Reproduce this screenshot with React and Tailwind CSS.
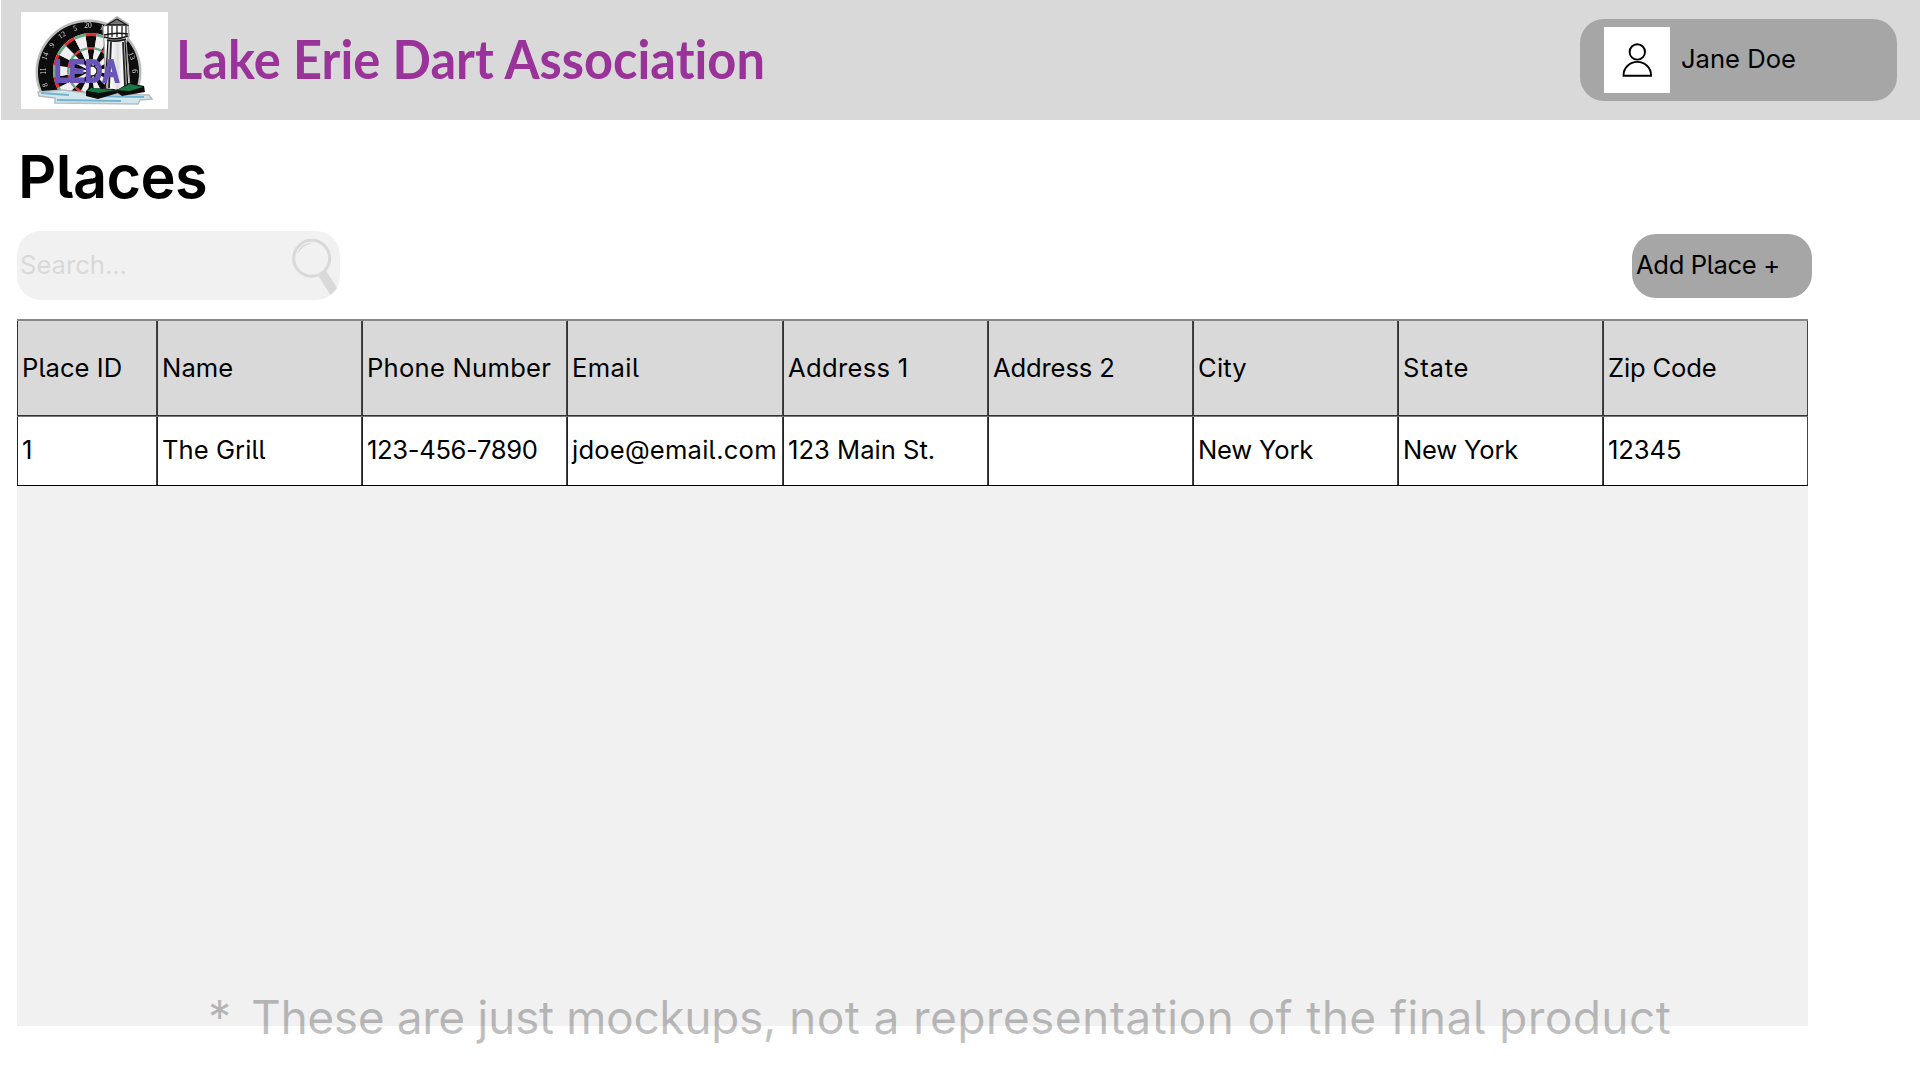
import React from "react";

const columns = [
  { label: "Place ID", value: "1", head: "tracking-[0.05px]", body: "" },
  { label: "Name", value: "The Grill", head: "tracking-[0.1px]", body: "tracking-[0.05px]" },
  { label: "Phone Number", value: "123-456-7890", head: "tracking-[0.25px]", body: "tracking-[-0.35px]" },
  { label: "Email", value: "jdoe@email.com", head: "tracking-[0.4px]", body: "tracking-[0.2px]" },
  { label: "Address 1", value: "123 Main St.", head: "tracking-[0.3px]", body: "tracking-[0px]" },
  { label: "Address 2", value: "", head: "tracking-[-0.15px]", body: "" },
  { label: "City", value: "New York", head: "tracking-[0.2px]", body: "tracking-[-0.2px]" },
  { label: "State", value: "New York", head: "tracking-[0.8px]", body: "tracking-[-0.2px]" },
  { label: "Zip Code", value: "12345", head: "tracking-[-0.15px]", body: "tracking-[-0.1px]" },
];

const grid = "grid grid-cols-[140px_205px_205px_216px_205px_205px_205px_205px_205px]";

function polar(r, deg) {
  const a = (deg * Math.PI) / 180;
  return `${(70 + r * Math.sin(a)).toFixed(2)} ${(59 - r * Math.cos(a)).toFixed(2)}`;
}

function ring(r1, r2, a, b) {
  return `M${polar(r1, a)}L${polar(r2, a)}A${r2} ${r2} 0 0 1 ${polar(r2, b)}L${polar(r1, b)}A${r1} ${r1} 0 0 0 ${polar(r1, a)}Z`;
}

function Logo() {
  const wedges = Array.from({ length: 20 }, (_, i) => i);
  const marks = [
    [24, 73, "8", -110], [22, 59, "11", -90], [24, 44, "14", -70], [31, 33, "9", -52],
    [41, 23, "12", -35], [54, 16, "5", -15], [67, 13, "20", 0], [81, 15, "1", 14],
    [111, 44, "13", 70], [113, 59, "6", 90],
  ];
  return (
    <svg viewBox="0 0 147 97" className="h-[97px] w-[147px] shrink-0 bg-white">
      <defs>
        <clipPath id="board"><path d="M0 0H147V82H0Z" /></clipPath>
        <linearGradient id="tower" x1="0" x2="1">
          <stop offset="0" stopColor="#777" /><stop offset=".25" stopColor="#fff" />
          <stop offset=".55" stopColor="#ddd" /><stop offset=".8" stopColor="#fff" /><stop offset="1" stopColor="#555" />
        </linearGradient>
        <filter id="soft"><feGaussianBlur stdDeviation="0.6" /></filter>
      </defs>
      <g filter="url(#soft)">
        <g clipPath="url(#board)">
          <ellipse cx="67.500" cy="60" rx="53" ry="52.500" fill="#b9bbb9" />
          <ellipse cx="67.500" cy="60" rx="50.500" ry="50" fill="#080808" />
          <circle cx="70" cy="59" r="38" fill="#fff" />
          {wedges.map((i) => {
            const a = i * 18 - 9;
            const even = i % 2 === 0;
            return (
              <g key={i}>
                <path d={ring(3, 36, a, a + 18)} fill={even ? "#0a0a0a" : "#f1eef2"} />
                <path d={ring(35, 38, a, a + 18)} fill={even ? "#e02b30" : "#6aa985"} />
                <path d={ring(21.500, 24, a, a + 18)} fill={even ? "#d83a40" : "#6aa985"} />
              </g>
            );
          })}
          <circle cx="71" cy="59" r="5" fill="#fff" stroke="#222" strokeWidth="1.500" />
          {marks.map(([x, y, n, r]) => (
            <text key={n} x={x} y={y + 2.500} transform={`rotate(${r} ${x} ${y})`} textAnchor="middle" fontSize="7.500" fontFamily="Liberation Serif, serif" fill="#e0e0e0">{n}</text>
          ))}
        </g>
        <path d="M83 30L82 15L86 12L96 5L107 12L108 24L105 31L109 76H85Z" fill="#fff" stroke="#aaa" strokeWidth="1.500" />
        <path d="M87 28H104L107 78H84Z" fill="url(#tower)" stroke="#111" strokeWidth="1.200" />
        <path d="M90 30L88 76M102 30L104 76" stroke="#222" strokeWidth="1.800" />
        <path d="M86 13L96 7L106 13Z" fill="#777" stroke="#111" strokeWidth="1.300" />
        <path d="M87 14V25M91 14V25M96 14V25M101 14V25M105 14V25" stroke="#222" strokeWidth="1.300" />
        <path d="M83 23Q95 20 107 22M83 25Q95 29 107 24M86 28Q95 31 105 27" fill="none" stroke="#151515" strokeWidth="1.500" />
        <path d="M17 80L42 78L65 81L128 83L131 87L119 88L117 92L34 91L34 86L18 84Z" fill="#d2e6ee" stroke="#b7bec1" strokeWidth="1.500" />
        <path d="M20 81L48 83M36 88L100 89M70 84L123 85" stroke="#70b4cf" strokeWidth="2" />
        <path d="M108 71L123 74L124 80L101 84L94 79Z" fill="#111" />
        <path d="M109 72L122 75L108 79L96 78Z" fill="#177a46" />
        <path d="M68 76L93 77L97 81L77 87L65 84V79Z" fill="#080808" />
        <path d="M70 76L95 78L78 81L66 79Z" fill="#137742" />
        <text x="33.500" y="69.500" textLength="65" lengthAdjust="spacingAndGlyphs" fontFamily="Liberation Sans, sans-serif" fontSize="32" fontWeight="700" fill="#6a55b8" stroke="#6a55b8" strokeWidth="1.800">LEDA</text>
      </g>
    </svg>
  );
}

function UserIcon() {
  return (
    <svg viewBox="0 0 66 66" className="size-[66px] bg-white" fill="none" stroke="#000" strokeWidth="1.900">
      <circle cx="33.300" cy="24.900" r="7.700" />
      <path d="M19.600 48.700V47.900a13.700 13 0 0 1 27.400 0v.8Z" />
    </svg>
  );
}

function Magnifier() {
  return (
    <svg viewBox="0 0 50 69" className="h-[69px] w-[50px]">
      <circle cx="21.700" cy="27.300" r="18" fill="none" stroke="#d9d9d9" strokeWidth="3" />
      <path d="M28.300 44.700L35.700 39.300L48 58.300L40.300 63.700Z" fill="#d9d9d9" />
      <path d="M7.700 22Q10.500 13 21 12.300Q12 15 7.700 22Z" fill="#d9d9d9" stroke="#d9d9d9" strokeWidth=".5" />
    </svg>
  );
}

export default function App() {
  return (
    <div className="relative h-[1080px] w-[1920px] overflow-hidden bg-white font-['Inter',sans-serif] text-[25.6px] leading-[32px] font-[380] text-black [font-feature-settings:'cv05'_1]">
      <header className="ml-px flex h-[120px] items-center justify-between bg-[#d9d9d9] pr-[23px] pl-5">
        <div className="flex items-center">
          <Logo />
          <h1 className="ml-[8px] origin-left scale-x-[0.937] pb-[2px] font-['Lato',sans-serif] text-[54px] leading-[60px] font-bold whitespace-nowrap text-[#993399] [font-variant-ligatures:none]">
            Lake Erie Dart Association
          </h1>
        </div>
        <div className="flex h-[82px] w-[317px] items-center rounded-[24px] bg-[#a6a6a6] pl-[24px]">
          <UserIcon />
          <span className="ml-[11px] pb-[2px]">Jane Doe</span>
        </div>
      </header>

      <main className="pl-[17px]">
        <h2 className="flex h-[111px] items-center pl-[1px] text-[59.5px] leading-[72px] font-semibold tracking-[-0.6px]">Places</h2>

        <div className="flex h-[69px] w-[1795px] items-center justify-between">
          <div className="flex h-[69px] w-[323px] items-center justify-between overflow-hidden rounded-[24px] bg-[#f1f1f1] pl-[3px] text-[#d9d9d9]">
            <span className="pb-[2px]">Search...</span>
            <Magnifier />
          </div>
          <button className="flex h-[64px] w-[180px] items-center rounded-[24px] bg-[#a6a6a6] pb-[2px] pl-[4px] tracking-[-0.35px]">
            Add Place +
          </button>
        </div>

        <section className="mt-[19px] h-[707px] w-[1791px] bg-[#f1f1f1]">
          <div className={`${grid} h-[97px] border-t-2 border-b border-t-[#888] border-b-[#333] bg-[#d9d9d9]`}>
            {columns.map((c) => (
              <div key={c.label} className={`flex items-center border-r border-l border-r-[#444] border-l-[#333] pb-[1px] pl-[4px] whitespace-nowrap ${c.head}`}>
                {c.label}
              </div>
            ))}
          </div>
          <div className={`${grid} h-[70px] border-t border-b border-t-[#777] border-b-black bg-white`}>
            {columns.map((c) => (
              <div key={c.label} className={`flex items-center border-r border-l border-r-[#444] border-l-[#222] pb-[3px] pl-[4px] whitespace-nowrap ${c.body}`}>
                {c.value}
              </div>
            ))}
          </div>
        </section>
      </main>

      <p className="absolute top-[987px] left-[208px] flex text-[46.3px] leading-[60px] font-normal whitespace-pre text-black/25">
        <span className="w-[43px]">*</span>
        <span className="tracking-[-0.5px]">These are just mockups,</span>
        <span className="tracking-[0.28px]"> not a representation of the final product</span>
      </p>
    </div>
  );
}
